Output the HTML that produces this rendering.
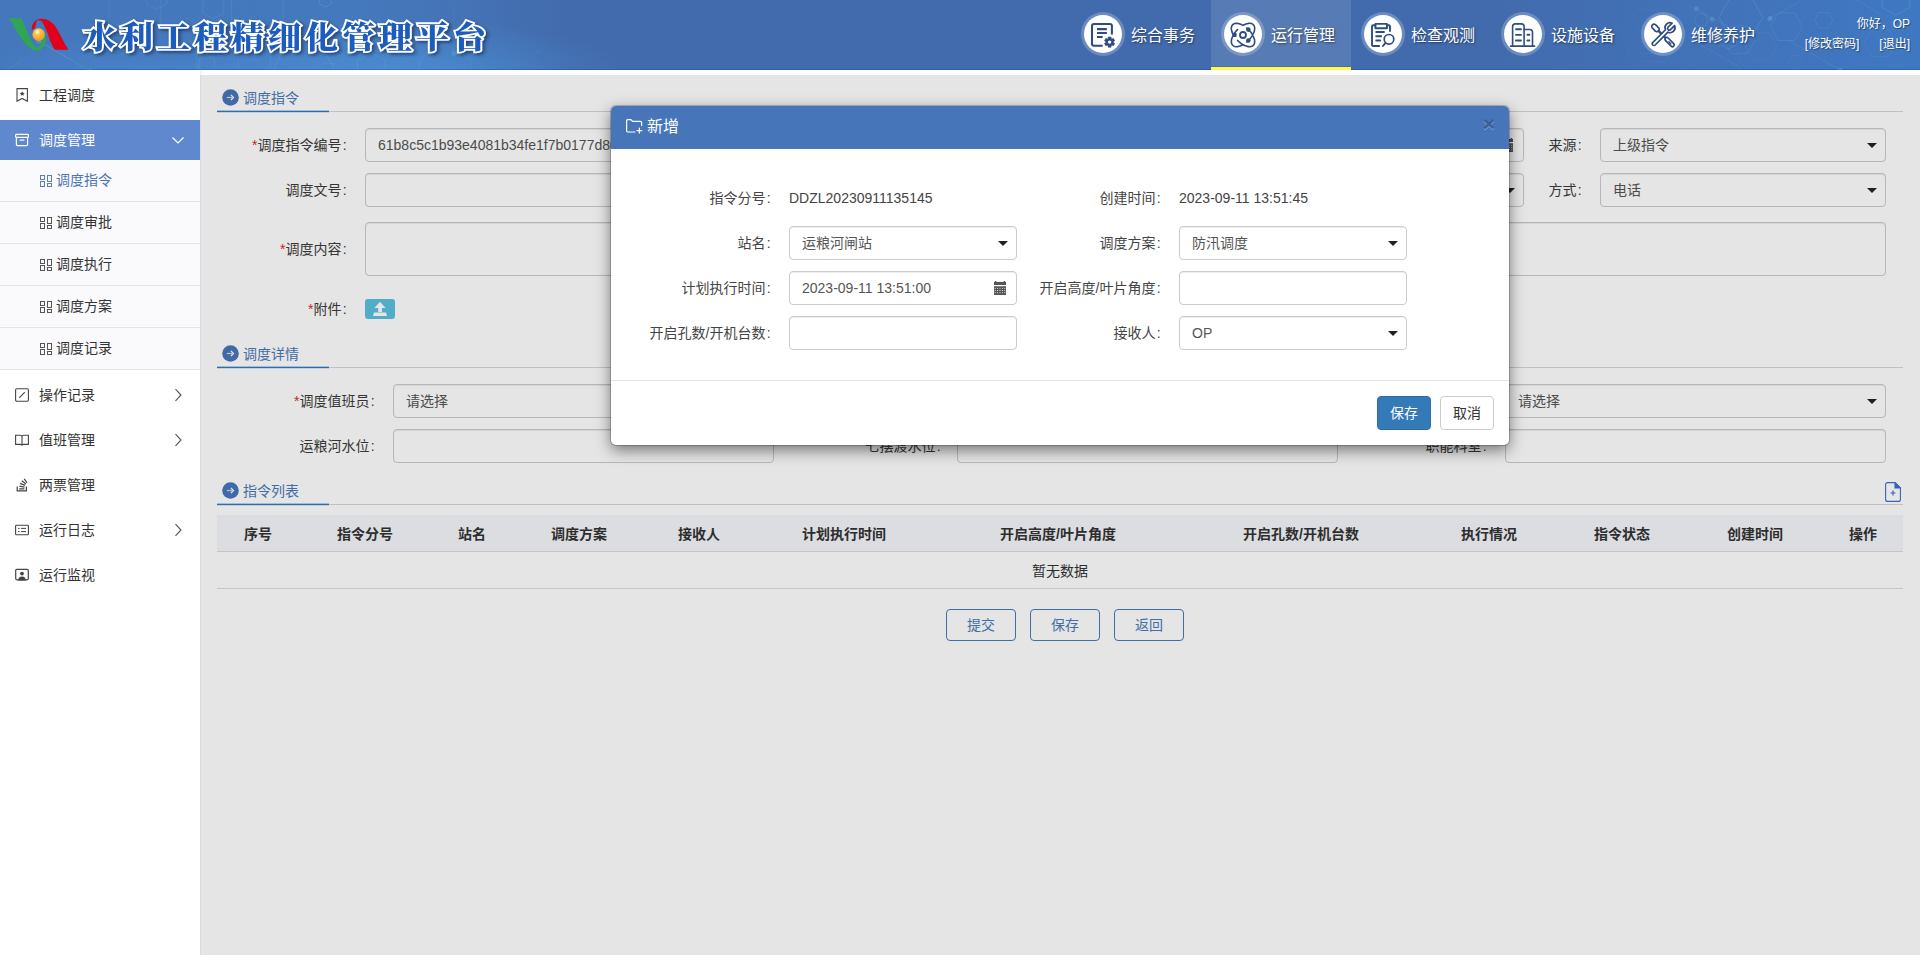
<!DOCTYPE html>
<html lang="zh-CN">
<head>
<meta charset="utf-8">
<title>水利工程精细化管理平台</title>
<style>
*{box-sizing:border-box;margin:0;padding:0}
html,body{width:1920px;height:955px;overflow:hidden;background:#fff}
body{font-family:"Liberation Sans","Noto Sans CJK SC",sans-serif;font-size:14px;color:#333;position:relative}
/* ---------- header ---------- */
#hd{position:absolute;left:0;top:0;width:1920px;height:70px;background:#426bad;overflow:hidden}
#hd:after{content:"";position:absolute;left:0;top:69px;width:1920px;height:1px;background:rgba(20,60,150,.3)}
#nav{z-index:2}
#hd .bgl{position:absolute;left:0;top:0;width:640px;height:70px;background:radial-gradient(ellipse 230px 60px at 400px 78px,rgba(80,160,230,.55),rgba(80,160,230,0) 100%),radial-gradient(ellipse 200px 50px at 140px 80px,rgba(80,150,225,.35),rgba(80,150,225,0) 100%),linear-gradient(90deg,#4477bb 0%,#4579bd 55%,#4473b6 72%,#426bad 88%)}
#hd .bgr{position:absolute;right:0;top:0;width:420px;height:70px;background:linear-gradient(90deg,#426bad 0%,#4272b8 45%,#3f78c2 100%)}
#hd svg.pat{position:absolute;top:0;height:70px}
#logo{position:absolute;left:8px;top:16px;width:62px;height:36px}
#title{position:absolute;left:83px;top:12px;height:52px;line-height:52px;font-family:"Liberation Serif","Noto Serif CJK SC",serif;font-weight:900;font-size:33px;letter-spacing:4px;color:#1b5cbd;white-space:nowrap;-webkit-text-stroke:4px #fff;paint-order:stroke fill;filter:drop-shadow(2px 2px 2px rgba(0,0,30,.45));transform:scaleY(.92);transform-origin:0 50%}
#nav{position:absolute;left:1071px;top:0;height:70px;display:flex}
#nav .it{width:140px;height:70px;position:relative;color:#fff;font-size:16px;text-shadow:1px 1px 2px rgba(0,0,0,.5)}
#nav .it.on{background:linear-gradient(#577bb5,#577bb5 66px,#476dba 66px,#476dba 67px,#fffa4a 67px)}
#nav .it .ic{position:absolute;left:13px;top:15px;width:38px;height:38px;border-radius:50%;background:#fff;box-shadow:0 0 0 3px rgba(255,255,255,.22)}
#nav .it .ic svg{overflow:visible;position:absolute;left:7px;top:8px;width:24px;height:24px}
#nav .it span{position:absolute;left:60px;top:1px;line-height:69px;white-space:nowrap}
#user{position:absolute;right:10px;top:14px;text-align:right;color:#fff;font-size:12px;line-height:20px;text-shadow:1px 1px 1px rgba(0,0,0,.4)}
#user b{font-weight:normal;margin-left:20px}
/* ---------- sidebar ---------- */
#sb{position:absolute;left:0;top:70px;width:200px;height:885px;background:#fff}
#sb .m{position:relative;height:40px;margin-top:5px;line-height:40px;padding-left:39px;font-size:14px;color:#333}
#sb .m.on{background:#5f88ce;color:#fff}
#sb .m svg.i{position:absolute;left:15px;top:13px;width:14px;height:14px}
#sb .m svg.a{position:absolute;left:172px;top:13px;width:12px;height:14px}
#sb .s{height:42px;line-height:41px;background:#fafafd;border-bottom:1px solid #e4e4e6;padding-left:56px;color:#333;position:relative}
#sb .s.on{color:#4a74b4}
#sb .s svg{position:absolute;left:40px;top:15px;width:12px;height:12px}
/* ---------- main ---------- */
#main{position:absolute;left:200px;top:70px;width:1720px;height:885px;background:#fff;box-shadow:inset 3px 0 3px -1px rgba(0,0,0,.05)}
#frame{position:absolute;left:1px;top:5px;width:1719px;height:880px;background:#fff}
#ov{position:absolute;left:200px;top:75px;width:1720px;height:880px;background:rgba(0,0,0,.102);z-index:5}
.sec{position:absolute;left:16px;width:1686px;height:29px;border-bottom:1px solid #d6d6d6;color:#4a7ab8;font-size:14px}
.sec i{position:absolute;left:0;bottom:-1px;width:112px;height:1px;background:#2f7bc8;box-shadow:0 -1px 0 rgba(47,123,200,.35),0 1px 0 rgba(47,123,200,.2)}
.sec svg.c{position:absolute;left:5px;top:5.5px;width:17px;height:17px}
.sec span{position:absolute;left:26px;top:5px;line-height:20px}
.lb{position:absolute;height:34px;line-height:34px;text-align:right;white-space:nowrap;color:#3c3c3c;font-size:14px}
.lb em{color:#e0262a;font-style:normal}
.lb .c{display:inline-block;width:6.5px;text-align:center}
#md .lb{color:#444}#md .lb.v{color:#444}
.in{position:absolute;height:34px;line-height:32px;border:1px solid #ccc;border-radius:4px;background:#fff;box-shadow:inset 0 1px 1px rgba(0,0,0,.075);padding-left:12px;color:#555;font-size:14px;white-space:nowrap;overflow:hidden}
.in.sel:after{content:"";position:absolute;right:8.5px;top:14px;border:5px solid transparent;border-top:5px solid #222;border-bottom:0}
.in svg.cal{position:absolute;right:10px;top:9px;width:12px;height:14px}
table.g{position:absolute;left:16px;top:440px;width:1686px;border-collapse:collapse;table-layout:fixed}
table.g th{height:36px;background:#f5f6fa;font-weight:bold;color:#333;font-size:14px;border-bottom:1px solid #dcdcdc;text-align:center}
table.g td{height:37px;text-align:center;border-bottom:1px solid #dcdcdc;color:#333}
.ob{position:absolute;top:534px;width:70px;height:32px;line-height:30px;border:1px solid #4a7ab8;border-radius:4px;color:#4a7ab8;text-align:center;background:#fff;font-size:14px}
/* ---------- modal ---------- */
#md{position:absolute;left:611px;top:106px;width:898px;height:339px;background:#fff;border-radius:5px;box-shadow:0 5px 15px rgba(0,0,0,.5),0 0 0 1px rgba(0,0,0,.2);z-index:10}
#md .h{position:absolute;left:0;top:0;width:898px;height:43px;background:#4676b9;border-radius:5px 5px 0 0;color:#fff;font-size:16px;line-height:40px}
#md .h svg{position:absolute;left:15px;top:12.5px;width:17px;height:15px}
#md .h span{position:absolute;left:36px;top:1px}
#md .h b{position:absolute;right:14px;top:0;font-size:21px;font-weight:bold;color:#3a5f96;line-height:36px;text-shadow:0 1px 0 rgba(255,255,255,.35)}
#md .ft{position:absolute;left:0;top:274px;width:898px;height:65px;border-top:1px solid #e5e5e5}
.btn{position:absolute;top:15px;height:34px;line-height:32px;border-radius:4px;font-size:14px;text-align:center;border:1px solid #ccc;color:#333;background:#fff}
.btn.p{background:#337ab7;border-color:#2e6da4;color:#fff}
</style>
</head>
<body>
<div id="hd">
  <div class="bgl"></div><div class="bgr"></div>
  <svg class="pat" style="left:0;width:560px" viewBox="0 0 560 70"><defs><linearGradient id="fl" x1="0" x2="1"><stop offset="0" stop-color="#fff"/><stop offset=".7" stop-color="#fff"/><stop offset="1" stop-color="#fff" stop-opacity="0"/></linearGradient><mask id="ml"><rect width="560" height="70" fill="url(#fl)"/></mask></defs><g mask="url(#ml)"><polygon points="134.1,44.5 123.7,50.5 113.3,44.5 113.3,32.5 123.7,26.5 134.1,32.5" fill="none" stroke="#7fd0f0" stroke-opacity="0.18" stroke-width="1"/><polygon points="331.4,3.7 325.4,7.2 319.3,3.7 319.3,-3.3 325.4,-6.8 331.4,-3.3" fill="none" stroke="#7fd0f0" stroke-opacity="0.18" stroke-width="1"/><polygon points="160.8,28.7 134.9,43.7 108.9,28.7 108.9,-1.3 134.9,-16.3 160.8,-1.3" fill="none" stroke="#7fd0f0" stroke-opacity="0.13" stroke-width="1"/><polygon points="214.3,68.4 206.5,72.9 198.7,68.4 198.7,59.4 206.5,54.9 214.3,59.4" fill="none" stroke="#7fd0f0" stroke-opacity="0.15" stroke-width="1"/><polygon points="392.5,48.7 389.0,54.8 382.0,54.8 378.5,48.7 382.0,42.7 389.0,42.7" fill="none" stroke="#7fd0f0" stroke-opacity="0.09" stroke-width="1"/><polygon points="167.1,3.5 156.7,9.5 146.3,3.5 146.3,-8.5 156.7,-14.5 167.1,-8.5" fill="none" stroke="#7fd0f0" stroke-opacity="0.13" stroke-width="1"/><polygon points="385.2,76.7 371.3,84.7 357.5,76.7 357.5,60.7 371.3,52.7 385.2,60.7" fill="none" stroke="#7fd0f0" stroke-opacity="0.16" stroke-width="1"/><polygon points="513.3,5.7 507.3,16.1 495.3,16.1 489.3,5.7 495.3,-4.7 507.3,-4.7" fill="none" stroke="#7fd0f0" stroke-opacity="0.08" stroke-width="1"/><polygon points="283.3,30.6 257.3,45.6 231.4,30.6 231.4,0.6 257.3,-14.4 283.3,0.6" fill="none" stroke="#7fd0f0" stroke-opacity="0.13" stroke-width="1"/><polygon points="238.0,72.7 219.0,83.7 199.9,72.7 199.9,50.7 219.0,39.7 238.0,50.7" fill="none" stroke="#7fd0f0" stroke-opacity="0.11" stroke-width="1"/><polygon points="333.8,67.3 318.8,93.3 288.8,93.3 273.8,67.3 288.8,41.4 318.8,41.4" fill="none" stroke="#7fd0f0" stroke-opacity="0.18" stroke-width="1"/><polygon points="471.3,89.3 445.3,104.3 419.3,89.3 419.3,59.3 445.3,44.3 471.3,59.3" fill="none" stroke="#7fd0f0" stroke-opacity="0.16" stroke-width="1"/><polygon points="523.6,67.4 512.6,86.4 490.6,86.4 479.6,67.4 490.6,48.3 512.6,48.3" fill="none" stroke="#7fd0f0" stroke-opacity="0.08" stroke-width="1"/><polygon points="341.1,74.0 335.1,84.4 323.1,84.4 317.1,74.0 323.1,63.7 335.1,63.7" fill="none" stroke="#7fd0f0" stroke-opacity="0.10" stroke-width="1"/><polygon points="266.6,46.1 258.6,60.0 242.6,60.0 234.6,46.1 242.6,32.2 258.6,32.2" fill="none" stroke="#7fd0f0" stroke-opacity="0.08" stroke-width="1"/><polygon points="223.8,13.1 213.4,19.1 203.0,13.1 203.0,1.1 213.4,-4.9 223.8,1.1" fill="none" stroke="#7fd0f0" stroke-opacity="0.13" stroke-width="1"/><path d="M453.8 3.1L453.8 53.6" stroke="#7fd0f0" stroke-opacity="0.13" stroke-width="1"/><circle cx="453.8" cy="53.6" r="2.500" fill="#8fe0ff" fill-opacity=".22"/><path d="M196.5 41.0L196.5 96.3" stroke="#7fd0f0" stroke-opacity="0.13" stroke-width="1"/><circle cx="196.5" cy="96.3" r="2.500" fill="#8fe0ff" fill-opacity=".22"/><path d="M509.9 35.4L538.0 51.6" stroke="#7fd0f0" stroke-opacity="0.13" stroke-width="1"/><circle cx="538.0" cy="51.6" r="2.500" fill="#8fe0ff" fill-opacity=".22"/><path d="M40.0 42.0L90.2 71.0" stroke="#7fd0f0" stroke-opacity="0.13" stroke-width="1"/><circle cx="90.2" cy="71.0" r="2.500" fill="#8fe0ff" fill-opacity=".22"/><path d="M505.1 20.4L482.4 33.5" stroke="#7fd0f0" stroke-opacity="0.13" stroke-width="1"/><circle cx="482.4" cy="33.5" r="2.500" fill="#8fe0ff" fill-opacity=".22"/><path d="M22.1 60.7L-7.7 77.9" stroke="#7fd0f0" stroke-opacity="0.13" stroke-width="1"/><circle cx="-7.7" cy="77.9" r="2.500" fill="#8fe0ff" fill-opacity=".22"/><path d="M71.9 60.3L38.7 41.1" stroke="#7fd0f0" stroke-opacity="0.13" stroke-width="1"/><circle cx="38.7" cy="41.1" r="2.500" fill="#8fe0ff" fill-opacity=".22"/><path d="M270.4 45.1L270.4 92.3" stroke="#7fd0f0" stroke-opacity="0.13" stroke-width="1"/><circle cx="270.4" cy="92.3" r="2.500" fill="#8fe0ff" fill-opacity=".22"/></g></svg><svg class="pat" style="left:1590px;width:330px" viewBox="0 0 330 70"><defs><linearGradient id="fr" x1="0" x2="1"><stop offset="0" stop-color="#fff" stop-opacity="0"/><stop offset=".45" stop-color="#fff"/><stop offset="1" stop-color="#fff"/></linearGradient><mask id="mr"><rect width="330" height="70" fill="url(#fr)"/></mask></defs><g mask="url(#mr)"><polygon points="165.3,39.8 157.3,53.6 141.3,53.6 133.3,39.8 141.3,25.9 157.3,25.9" fill="none" stroke="#7fd0f0" stroke-opacity="0.13" stroke-width="1"/><polygon points="90.9,36.0 75.9,61.9 45.9,61.9 30.9,36.0 45.9,10.0 75.9,10.0" fill="none" stroke="#7fd0f0" stroke-opacity="0.15" stroke-width="1"/><polygon points="38.1,19.3 34.6,25.3 27.6,25.3 24.1,19.3 27.6,13.2 34.6,13.2" fill="none" stroke="#7fd0f0" stroke-opacity="0.14" stroke-width="1"/><polygon points="212.5,26.7 204.5,40.5 188.5,40.5 180.5,26.7 188.5,12.8 204.5,12.8" fill="none" stroke="#7fd0f0" stroke-opacity="0.15" stroke-width="1"/><polygon points="212.6,61.5 209.1,67.6 202.1,67.6 198.6,61.5 202.1,55.5 209.1,55.5" fill="none" stroke="#7fd0f0" stroke-opacity="0.08" stroke-width="1"/><polygon points="306.3,43.0 298.3,56.8 282.3,56.8 274.3,43.0 282.3,29.1 298.3,29.1" fill="none" stroke="#7fd0f0" stroke-opacity="0.11" stroke-width="1"/><polygon points="187.3,46.2 179.3,60.1 163.3,60.1 155.3,46.2 163.3,32.4 179.3,32.4" fill="none" stroke="#7fd0f0" stroke-opacity="0.07" stroke-width="1"/><polygon points="172.9,17.3 161.9,36.3 139.9,36.3 128.9,17.3 139.9,-1.8 161.9,-1.8" fill="none" stroke="#7fd0f0" stroke-opacity="0.20" stroke-width="1"/><polygon points="242.6,20.2 238.1,28.0 229.1,28.0 224.6,20.2 229.1,12.4 238.1,12.4" fill="none" stroke="#7fd0f0" stroke-opacity="0.13" stroke-width="1"/><polygon points="37.0,64.3 23.2,72.3 9.3,64.3 9.3,48.3 23.2,40.3 37.0,48.3" fill="none" stroke="#7fd0f0" stroke-opacity="0.08" stroke-width="1"/><polygon points="157.5,71.6 142.5,97.6 112.5,97.6 97.5,71.6 112.5,45.7 142.5,45.7" fill="none" stroke="#7fd0f0" stroke-opacity="0.07" stroke-width="1"/><polygon points="319.8,7.2 305.9,15.2 292.1,7.2 292.1,-8.8 305.9,-16.8 319.8,-8.8" fill="none" stroke="#7fd0f0" stroke-opacity="0.20" stroke-width="1"/><polygon points="146.3,44.8 138.5,49.3 130.7,44.8 130.7,35.8 138.5,31.3 146.3,35.8" fill="none" stroke="#7fd0f0" stroke-opacity="0.17" stroke-width="1"/><polygon points="118.2,19.9 114.7,26.0 107.7,26.0 104.2,19.9 107.7,13.8 114.7,13.8" fill="none" stroke="#7fd0f0" stroke-opacity="0.19" stroke-width="1"/><polygon points="50.5,55.1 44.4,58.6 38.4,55.1 38.4,48.1 44.4,44.6 50.5,48.1" fill="none" stroke="#7fd0f0" stroke-opacity="0.08" stroke-width="1"/><polygon points="74.6,39.7 66.6,53.6 50.6,53.6 42.6,39.7 50.6,25.9 66.6,25.9" fill="none" stroke="#7fd0f0" stroke-opacity="0.13" stroke-width="1"/><path d="M138.3 26.9L106.5 8.4" stroke="#7fd0f0" stroke-opacity="0.13" stroke-width="1"/><circle cx="106.5" cy="8.4" r="2.500" fill="#8fe0ff" fill-opacity=".22"/><path d="M70.2 18.9L70.2 51.1" stroke="#7fd0f0" stroke-opacity="0.13" stroke-width="1"/><circle cx="70.2" cy="51.1" r="2.500" fill="#8fe0ff" fill-opacity=".22"/><path d="M292.0 14.7L240.2 -15.2" stroke="#7fd0f0" stroke-opacity="0.13" stroke-width="1"/><circle cx="240.2" cy="-15.2" r="2.500" fill="#8fe0ff" fill-opacity=".22"/><path d="M198.7 40.4L250.3 70.2" stroke="#7fd0f0" stroke-opacity="0.13" stroke-width="1"/><circle cx="250.3" cy="70.2" r="2.500" fill="#8fe0ff" fill-opacity=".22"/><path d="M70.4 18.1L70.4 51.2" stroke="#7fd0f0" stroke-opacity="0.13" stroke-width="1"/><circle cx="70.4" cy="51.2" r="2.500" fill="#8fe0ff" fill-opacity=".22"/><path d="M97.8 5.1L122.3 19.3" stroke="#7fd0f0" stroke-opacity="0.13" stroke-width="1"/><circle cx="122.3" cy="19.3" r="2.500" fill="#8fe0ff" fill-opacity=".22"/><path d="M210.1 1.1L179.9 18.5" stroke="#7fd0f0" stroke-opacity="0.13" stroke-width="1"/><circle cx="179.9" cy="18.5" r="2.500" fill="#8fe0ff" fill-opacity=".22"/><path d="M149.6 67.1L103.4 40.5" stroke="#7fd0f0" stroke-opacity="0.13" stroke-width="1"/><circle cx="103.4" cy="40.5" r="2.500" fill="#8fe0ff" fill-opacity=".22"/></g></svg>
  <svg id="logo" viewBox="0 0 62 36"><defs><radialGradient id="ball" cx=".4" cy=".3" r=".75"><stop offset="0" stop-color="#fffbe0"/><stop offset=".3" stop-color="#fbc648"/><stop offset="1" stop-color="#ee9414"/></radialGradient></defs>
<path d="M.8 2.300H13.100C16 7 19 15 22.100 22.200S26.500 31 29.500 31.500C32 30.500 34 26.500 34.600 22L37.800 20C38.600 27.500 35 34.800 28.700 34.800C25 34.800 21 31.500 17.600 28.200C13 23 9.500 16 8.600 15.100C6 10.500 3.500 6 .8 2.300Z" fill="#2ea656"/>
<path d="M23.600 14.100C23.800 9 25 4.500 32.200 2.800C39 2.500 43 5.500 46.300 9.100C50 14 52 19 52.800 20.100C55 25 58 30 60.400 33.700H46.800C44.500 30 42.500 26 41.200 22.200C40 18 38.500 14.500 37.200 12.100C36 9 34.500 6 33.200 5.100C31 4 29.500 4.200 29.200 4.600C28 6 27.800 8 28.200 9.100L26.200 13.100Z" fill="#e0021c"/>
<circle cx="30.700" cy="18.600" r="6.300" fill="url(#ball)"/></svg>
  <div id="title">水利工程精细化管理平台</div>
  <div id="nav"><div class="it"><div class="ic"><svg viewBox="0 0 24 24" fill="none" stroke="#2f4c80" stroke-width="2.100" stroke-linecap="butt" stroke-linejoin="round"><path d="M11.700 22.800H3Q1 22.800 1 20.800V3Q1 1 3 1H18.900Q20.900 1 20.900 3V11.500"/><path d="M6 6.100h9.900M6 10.050h9.900M6 14h5.700"/><polygon points="17.1,14.0 20.1,14.0 20.0,15.5 21.1,16.1 22.3,15.3 23.7,17.8 22.5,18.5 22.5,19.7 23.7,20.4 22.3,22.9 21.1,22.1 20.0,22.7 20.1,24.2 17.1,24.2 17.2,22.7 16.1,22.1 14.9,22.9 13.5,20.4 14.7,19.7 14.7,18.5 13.5,17.8 14.9,15.3 16.1,16.1 17.2,15.5" fill="#2f4c80" stroke="#2f4c80" stroke-width=".6"/><circle cx="18.6" cy="19.1" r="1.700" fill="#fff" stroke="none"/></svg></div><span>综合事务</span></div><div class="it on"><div class="ic"><svg viewBox="0 0 24 24" fill="none" stroke="#2f4c80" stroke-width="1.600" stroke-linecap="round" stroke-linejoin="round"><path d="M22.3 22.3L21.9 22.7L21.3 23.0L20.8 23.3L20.1 23.5L19.5 23.6L18.7 23.7L18.0 23.6L17.2 23.6L16.3 23.4L15.5 23.1L14.6 22.8L13.7 22.5L12.8 22.0L11.8 21.5L10.9 21.0L10.0 20.4L9.1 19.7L8.2 19.0L7.4 18.2L6.6 17.4L6.6 17.4M2.3 11.9L1.8 10.9L1.4 10.0L1.0 9.1L0.8 8.3L0.6 7.4L0.4 6.6L0.3 5.8L0.3 5.0L0.4 4.3L0.6 3.6L0.8 3.0L1.1 2.5L1.4 2.0L1.8 1.5L2.3 1.2L2.8 0.9L3.4 0.6L4.1 0.5L4.8 0.4L5.5 0.3L6.3 0.4L7.1 0.5L8.0 0.7L8.8 0.9L9.7 1.3L10.6 1.7L11.6 2.1L11.9 2.3M15.8 5.0L16.6 5.8L17.4 6.6L18.2 7.4L19.0 8.2L19.7 9.1L20.4 10.0L21.0 10.9L21.5 11.8L22.0 12.8L22.5 13.7L22.8 14.6L23.1 15.4L23.4 16.3L23.6 17.2L23.6 18.0L23.7 18.7L23.6 19.5L23.5 20.1L23.3 20.8L23.0 21.3L22.7 21.9L22.3 22.3L22.3 22.3M22.3 1.7L22.7 2.1L23.0 2.7L23.3 3.2L23.5 3.9L23.6 4.5L23.7 5.3L23.6 6.0L23.6 6.8L23.4 7.7L23.2 8.6L22.8 9.4L22.5 10.3L22.0 11.2L21.5 12.2L21.0 13.1L20.4 14.0L19.7 14.9L19.0 15.8L18.2 16.6L17.4 17.4L16.6 18.2L15.8 19.0L15.8 19.0M11.9 21.7L10.9 22.2L10.0 22.6L9.1 23.0L8.3 23.2L7.4 23.4L6.6 23.6L5.8 23.7L5.0 23.7L4.3 23.6L3.6 23.4L3.0 23.2L2.5 22.9L2.0 22.6L1.5 22.2L1.2 21.7L0.9 21.2L0.6 20.6L0.5 19.9L0.4 19.2L0.3 18.5L0.4 17.7L0.5 16.9L0.7 16.0L0.9 15.2L1.3 14.3L1.7 13.4L2.1 12.4L2.3 12.1M2.6 11.5L3.2 10.6L3.8 9.7L4.5 8.8L5.3 7.9L6.0 7.1L6.6 6.6M12.1 2.3L13.1 1.8L14.0 1.4L14.9 1.0L15.7 0.8L16.6 0.6L17.4 0.4L18.2 0.3L19.0 0.3L19.7 0.4L20.4 0.6L21.0 0.8L21.5 1.1L22.0 1.4L22.3 1.7"/><circle cx="12" cy="12" r="3" stroke-width="1.800"/><circle cx="17.300" cy="6.600" r="2.300" fill="#2f4c80" stroke="none"/><rect x="1.600" y="9.800" width="4" height="4.200" rx="1" fill="#2f4c80" stroke="none"/><circle cx="17.300" cy="17.500" r="2.300" fill="#2f4c80" stroke="none"/></svg></div><span>运行管理</span></div><div class="it"><div class="ic"><svg viewBox="0 0 24 24" fill="none" stroke="#2f4c80" stroke-width="1.900" stroke-linecap="round" stroke-linejoin="round"><path d="M8.100 23H2.200Q1 23 1 21.800V3.500Q1 2.300 2.200 2.300H4.400M15.900 2.300H17.800Q19 2.300 19 3.500V8"/><path d="M4.400 .9h11.500v4.300h-11.500z"/><path d="M5.200 9h7.800M5.200 13.200h5M5.200 17.500h4"/><circle cx="18" cy="16.300" r="4.800" stroke-width="1.700"/><path d="M14.300 20.100L11.900 23"/></svg></div><span>检查观测</span></div><div class="it"><div class="ic"><svg viewBox="0 0 24 24" fill="none" stroke="#2f4c80" stroke-width="1.600" stroke-linecap="round" stroke-linejoin="round"><path d="M1.600 23V3.600Q1.600 .9 4.300 .9H10.400Q13.100 .9 13.100 3.600V23"/><path d="M13.100 6.500H18.800Q21.500 6.500 21.500 9.200V23"/><path d="M-.4 23.100H23.600" stroke-width="1.700"/><path d="M5 6.300h5M5 11.900h5M5 17.500h5M16.400 11.700h2M16.400 17.500h2" stroke-width="1.900"/></svg></div><span>设施设备</span></div><div class="it"><div class="ic"><svg viewBox="0 0 24 24" fill="#fff" stroke="#2f4c80" stroke-width="1.700" stroke-linecap="round" stroke-linejoin="round"><g transform="translate(.8 1.200) rotate(45)"><path d="M9.500 0H19.500" stroke-width="2.400"/><path d="M2.200 -2.100Q3.200 -2.900 4.200 -2.100Q5.200 -2.900 6.200 -2.100Q7.200 -2.900 8.200 -2.100Q9.500 -1.500 9.500 0Q9.500 1.500 8.200 2.100Q7.200 2.900 6.200 2.100Q5.200 2.900 4.200 2.100Q3.200 2.900 2.200 2.100Q.85 1.500 .85 0Q.85 -1.500 2.200 -2.100Z"/><rect x="19.500" y="-1.800" width="11.500" height="3.600" rx="1.800"/><path d="M24.500 .3H27.500" stroke-width="1.200"/></g><g transform="translate(1.700 22) rotate(-45)"><path d="M19.82 -1.75L1.75 -1.75A1.75 1.75 0 0 0 1.75 1.75L19.82 1.75A5.0 5.0 0 0 0 29.20 1.7L23.5 1.7A1.7 1.7 0 0 1 23.5 -1.7L29.20 -1.7A5.0 5.0 0 0 0 19.82 -1.75Z"/></g></svg></div><span>维修养护</span></div></div>
  <div id="user">你好，OP<br>[修改密码]<b>[退出]</b></div>
</div>
<div id="sb"><div class="m"><svg class="i" viewBox="0 0 14 14" fill="none" stroke="#444" stroke-width="1.100"><path d="M2 .6H12.400V13.200L7.200 10.400L2 13.200Z" stroke-linejoin="miter"/><path d="M7.200 3.200l.75 1.600 1.700.2-1.250 1.150.35 1.700-1.550-.85-1.550.85.35-1.700L4.750 5l1.700-.2z" fill="#444" stroke="none"/></svg>工程调度</div><div class="m on"><svg class="i" viewBox="0 0 14 14" fill="none" stroke="#fff" stroke-width="1.200"><rect x=".6" y="1.400" width="12.800" height="3" rx=".8"/><path d="M1.400 4.400V11.600Q1.400 12.600 2.400 12.600H11.600Q12.600 12.600 12.600 11.600V4.400M4.600 7.200H9.400"/></svg>调度管理<svg class="a" viewBox="0 0 12 14" fill="none" stroke="currentColor" stroke-width="1.200"><path d="M0.500 4.500L6 10L11.500 4.500"/></svg></div><div class="s on"><svg viewBox="0 0 12 12" fill="none" stroke="#5a7fc0" stroke-width="1"><rect x=".5" y=".5" width="4" height="4"/><rect x=".5" y="6.500" width="4" height="5"/><rect x="7.500" y=".5" width="4" height="6"/><rect x="7.500" y="8.500" width="4" height="3"/></svg>调度指令</div><div class="s"><svg viewBox="0 0 12 12" fill="none" stroke="#555" stroke-width="1"><rect x=".5" y=".5" width="4" height="4"/><rect x=".5" y="6.500" width="4" height="5"/><rect x="7.500" y=".5" width="4" height="6"/><rect x="7.500" y="8.500" width="4" height="3"/></svg>调度审批</div><div class="s"><svg viewBox="0 0 12 12" fill="none" stroke="#555" stroke-width="1"><rect x=".5" y=".5" width="4" height="4"/><rect x=".5" y="6.500" width="4" height="5"/><rect x="7.500" y=".5" width="4" height="6"/><rect x="7.500" y="8.500" width="4" height="3"/></svg>调度执行</div><div class="s"><svg viewBox="0 0 12 12" fill="none" stroke="#555" stroke-width="1"><rect x=".5" y=".5" width="4" height="4"/><rect x=".5" y="6.500" width="4" height="5"/><rect x="7.500" y=".5" width="4" height="6"/><rect x="7.500" y="8.500" width="4" height="3"/></svg>调度方案</div><div class="s"><svg viewBox="0 0 12 12" fill="none" stroke="#555" stroke-width="1"><rect x=".5" y=".5" width="4" height="4"/><rect x=".5" y="6.500" width="4" height="5"/><rect x="7.500" y=".5" width="4" height="6"/><rect x="7.500" y="8.500" width="4" height="3"/></svg>调度记录</div><div class="m"><svg class="i" viewBox="0 0 14 14" fill="none" stroke="#444" stroke-width="1.100"><rect x=".6" y=".8" width="12.800" height="12.400" rx="1.200"/><path d="M4.200 9.800L9.800 4.200"/></svg>操作记录<svg class="a" viewBox="0 0 12 14" fill="none" stroke="#555" stroke-width="1.100"><path d="M3.500 1.200L9 7L3.500 12.800"/></svg></div><div class="m"><svg class="i" viewBox="0 0 14 14" fill="none" stroke="#444" stroke-width="1.100"><path d="M.6 2.200H5.500Q7 2.200 7 3.600Q7 2.200 8.500 2.200H13.400V11.400H8.500Q7 11.400 7 12.400Q7 11.400 5.500 11.400H.6ZM7 3.600V12.200"/></svg>值班管理<svg class="a" viewBox="0 0 12 14" fill="none" stroke="#555" stroke-width="1.100"><path d="M3.500 1.200L9 7L3.500 12.800"/></svg></div><div class="m"><svg class="i" viewBox="0 0 14 14" fill="none" stroke="#444" stroke-width="1.200"><path d="M2.200 8.600V12.800H11.400V8.600M4.200 10.800H9.400M4.400 8.200L9.500 9.200M5.200 5.400L10 7.400M6.800 2.800L11 6M9.200 .8L12 4.600"/></svg>两票管理</div><div class="m"><svg class="i" viewBox="0 0 14 14" fill="none" stroke="#444" stroke-width="1.100"><rect x=".6" y="2.200" width="12.800" height="9.600" rx=".8"/><path d="M3 5.400h1.600M6 5.400h5M3 8.600h1.600M6 8.600h5" stroke-width="1"/></svg>运行日志<svg class="a" viewBox="0 0 12 14" fill="none" stroke="#555" stroke-width="1.100"><path d="M3.500 1.200L9 7L3.500 12.800"/></svg></div><div class="m"><svg class="i" viewBox="0 0 14 14" fill="none" stroke="#444" stroke-width="1.200"><rect x=".7" y="1.400" width="12.600" height="10.400" rx="1.200"/><circle cx="7" cy="5.600" r="1.900" fill="#444" stroke="none"/><path d="M3.200 12.600Q3.400 8.600 7 8.600Q10.600 8.600 10.800 12.600Z" fill="#444" stroke="none"/></svg>运行监视</div></div>
<div id="main"><div id="frame"><div class="sec" style="top:8px"><svg class="c" viewBox="0 0 17 17"><circle cx="8.500" cy="8.500" r="8.300" fill="#4876ba"/><path d="M4.800 8.500H10" fill="none" stroke="#c4d3ec" stroke-width="1.300"/><path d="M8.900 5.900L11.500 8.500L8.900 11.100" fill="none" stroke="#fff" stroke-width="1.300"/></svg><span>调度指令</span><i></i></div><div class="lb" style="left:-53px;top:53px;width:200px"><em>*</em>调度指令编号<span class="c">:</span></div><div class="in" style="left:164px;top:53px;width:435px;height:34px">61b8c5c1b93e4081b34fe1f7b0177d80</div><div class="lb" style="left:599px;top:53px;width:200px"><em>*</em>调度时间<span class="c">:</span></div><div class="in" style="left:899px;top:53px;width:424px;height:34px">2023-09-11 13:51:45<svg class="cal" viewBox="0 0 12 14"><path d="M.8 0h1.600v1.500h-1.600zM9.600 0h1.600v1.500h-1.600zM0 1h12v2.900h-12zM0 5.200h12v8.800h-12z" fill="#555"/><path d="M.7 7.400h11M.7 9.500h11M.7 11.700h11" stroke="#fff" stroke-width=".8" stroke-dasharray="1 1.400"/></svg></div><div class="lb" style="left:1182px;top:53px;width:200px">来源<span class="c">:</span></div><div class="in sel" style="left:1399px;top:53px;width:286px;height:34px">上级指令</div><div class="lb" style="left:-53px;top:98px;width:200px">调度文号<span class="c">:</span></div><div class="in" style="left:164px;top:98px;width:435px;height:34px"></div><div class="lb" style="left:599px;top:98px;width:200px">类型<span class="c">:</span></div><div class="in sel" style="left:899px;top:98px;width:424px;height:34px"></div><div class="lb" style="left:1182px;top:98px;width:200px">方式<span class="c">:</span></div><div class="in sel" style="left:1399px;top:98px;width:286px;height:34px">电话</div><div class="lb" style="left:-53px;top:157px;width:200px"><em>*</em>调度内容<span class="c">:</span></div><div class="in" style="left:164px;top:147px;width:1521px;height:54px"></div><div class="lb" style="left:-53px;top:217px;width:200px"><em>*</em>附件<span class="c">:</span></div><div style="position:absolute;left:164px;top:224px;width:30px;height:20px;background:#5bc0de;border-radius:3px"><svg viewBox="0 0 30 20" width="30" height="20"><path d="M15 2.800L20.600 9H17V13H13.200V9H9.400Z M9 13.500H21L22 17H8Z" fill="#fff"/></svg></div><div class="sec" style="top:264px"><svg class="c" viewBox="0 0 17 17"><circle cx="8.500" cy="8.500" r="8.300" fill="#4876ba"/><path d="M4.800 8.500H10" fill="none" stroke="#c4d3ec" stroke-width="1.300"/><path d="M8.900 5.900L11.500 8.500L8.900 11.100" fill="none" stroke="#fff" stroke-width="1.300"/></svg><span>调度详情</span><i></i></div><div class="lb" style="left:-25px;top:309px;width:200px"><em>*</em>调度值班员<span class="c">:</span></div><div class="in sel" style="left:192px;top:309px;width:381px;height:34px">请选择</div><div class="lb" style="left:541px;top:309px;width:200px"><em>*</em>调度负责人<span class="c">:</span></div><div class="in sel" style="left:756px;top:309px;width:381px;height:34px">请选择</div><div class="lb" style="left:1087px;top:309px;width:200px"><em>*</em>审批人<span class="c">:</span></div><div class="in sel" style="left:1304px;top:309px;width:381px;height:34px">请选择</div><div class="lb" style="left:-25px;top:354px;width:200px">运粮河水位<span class="c">:</span></div><div class="in" style="left:192px;top:354px;width:381px;height:34px"></div><div class="lb" style="left:541px;top:354px;width:200px">七摆渡水位<span class="c">:</span></div><div class="in" style="left:756px;top:354px;width:381px;height:34px"></div><div class="lb" style="left:1087px;top:354px;width:200px">职能科室<span class="c">:</span></div><div class="in" style="left:1304px;top:354px;width:381px;height:34px"></div><div class="sec" style="top:401px"><svg class="c" viewBox="0 0 17 17"><circle cx="8.500" cy="8.500" r="8.300" fill="#4876ba"/><path d="M4.800 8.500H10" fill="none" stroke="#c4d3ec" stroke-width="1.300"/><path d="M8.900 5.900L11.500 8.500L8.900 11.100" fill="none" stroke="#fff" stroke-width="1.300"/></svg><span>指令列表</span><i></i><svg style="position:absolute;left:1668px;top:6px" width="16" height="20" viewBox="0 0 16 20" fill="none" stroke="#3f6fd0" stroke-width="1.100"><path d="M10 .6H2.600Q.6 .6 .6 2.600V17.400Q.6 19.400 2.600 19.400H13.400Q15.400 19.400 15.400 17.400V6Z"/><path d="M10 .6V6H15.400Z" fill="#3f6fd0"/><path d="M8 8.500V13.500M5.500 11H10.500" stroke-width="1.200"/></svg></div><table class="g"><colgroup><col style="width:82px"><col style="width:132px"><col style="width:82px"><col style="width:132px"><col style="width:108px"><col style="width:182px"><col style="width:246px"><col style="width:240px"><col style="width:136px"><col style="width:130px"><col style="width:136px"><col style="width:80px"></colgroup><tr><th>序号</th><th>指令分号</th><th>站名</th><th>调度方案</th><th>接收人</th><th>计划执行时间</th><th>开启高度/叶片角度</th><th>开启孔数/开机台数</th><th>执行情况</th><th>指令状态</th><th>创建时间</th><th>操作</th></tr><tr><td colspan="12">暂无数据</td></tr></table><div class="ob" style="left:745px">提交</div><div class="ob" style="left:829px">保存</div><div class="ob" style="left:913px">返回</div></div></div>
<div id="ov"></div>
<div id="md"><div class="h"><svg viewBox="0 0 17 15" fill="none" stroke="#fff" stroke-width="1.200" stroke-linejoin="round" stroke-linecap="round"><path d="M9 13H1.800Q.6 13 .6 11.800V1.800Q.6 .6 1.800 .6H5L6.500 2.400H14.400Q15.600 2.400 15.600 3.600V6.500"/><path d="M13.400 9.200V14M11 11.600H15.800" stroke-width="1.300"/></svg><span>新增</span><b>×</b></div><div class="lb" style="left:-59px;top:75px;width:220px">指令分号<span class="c">:</span></div><div class="lb v" style="left:178px;top:75px;text-align:left">DDZL20230911135145</div><div class="lb" style="left:331px;top:75px;width:220px">创建时间<span class="c">:</span></div><div class="lb v" style="left:568px;top:75px;text-align:left">2023-09-11 13:51:45</div><div class="lb" style="left:-59px;top:120px;width:220px">站名<span class="c">:</span></div><div class="in sel" style="left:178px;top:120px;width:228px">运粮河闸站</div><div class="lb" style="left:331px;top:120px;width:220px">调度方案<span class="c">:</span></div><div class="in sel" style="left:568px;top:120px;width:228px">防汛调度</div><div class="lb" style="left:-59px;top:165px;width:220px">计划执行时间<span class="c">:</span></div><div class="in" style="left:178px;top:165px;width:228px">2023-09-11 13:51:00<svg class="cal" viewBox="0 0 12 14"><path d="M.8 0h1.600v1.500h-1.600zM9.600 0h1.600v1.500h-1.600zM0 1h12v2.900h-12zM0 5.200h12v8.800h-12z" fill="#555"/><path d="M.7 7.400h11M.7 9.500h11M.7 11.700h11" stroke="#fff" stroke-width=".8" stroke-dasharray="1 1.400"/></svg></div><div class="lb" style="left:331px;top:165px;width:220px">开启高度/叶片角度<span class="c">:</span></div><div class="in" style="left:568px;top:165px;width:228px"></div><div class="lb" style="left:-59px;top:210px;width:220px">开启孔数/开机台数<span class="c">:</span></div><div class="in" style="left:178px;top:210px;width:228px"></div><div class="lb" style="left:331px;top:210px;width:220px">接收人<span class="c">:</span></div><div class="in sel" style="left:568px;top:210px;width:228px">OP</div><div class="ft"><div class="btn p" style="left:766px;width:54px">保存</div><div class="btn" style="left:829px;width:54px">取消</div></div></div>
</body>
</html>
